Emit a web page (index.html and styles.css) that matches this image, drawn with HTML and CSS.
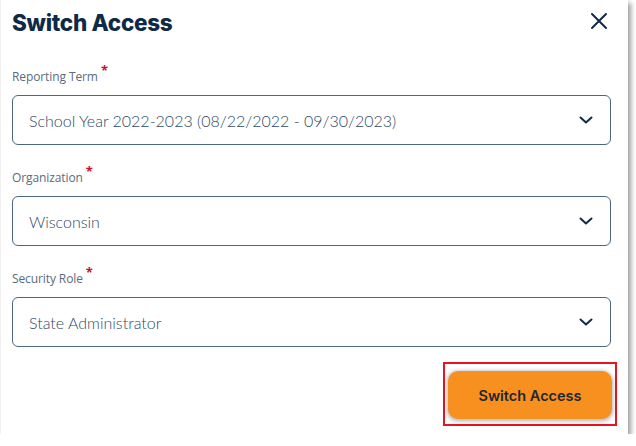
FILE: index.html
```html
<!DOCTYPE html>
<html lang="en">
<head>
<meta charset="utf-8">
<title>Switch Access</title>
<link rel="stylesheet" href="styles.css">
</head>
<body>
<div class="panel">
  <div class="header">
    <h1 class="title">Switch Access</h1>
    <button class="close" aria-label="Close">
      <svg width="18" height="18" viewBox="0 0 18 18"><path d="M2 2 L16 16 M16 2 L2 16" stroke="#102a48" stroke-width="2" fill="none" stroke-linecap="round"/></svg>
    </button>
  </div>
  <div class="fields">
    <div class="field">
      <div class="label">Reporting Term<span class="req">*</span></div>
      <div class="select"><span class="value">School Year 2022-2023 (08/22/2022 - 09/30/2023)</span>
        <svg class="chev" width="14" height="8" viewBox="0 0 14 8"><path d="M1.5 1.5 L7 6.5 L12.5 1.5" stroke="#102a48" stroke-width="2" fill="none" stroke-linecap="round" stroke-linejoin="round"/></svg></div>
    </div>
    <div class="field">
      <div class="label">Organization<span class="req">*</span></div>
      <div class="select"><span class="value">Wisconsin</span>
        <svg class="chev" width="14" height="8" viewBox="0 0 14 8"><path d="M1.5 1.5 L7 6.5 L12.5 1.5" stroke="#102a48" stroke-width="2" fill="none" stroke-linecap="round" stroke-linejoin="round"/></svg></div>
    </div>
    <div class="field">
      <div class="label">Security Role<span class="req">*</span></div>
      <div class="select"><span class="value">State Administrator</span>
        <svg class="chev" width="14" height="8" viewBox="0 0 14 8"><path d="M1.5 1.5 L7 6.5 L12.5 1.5" stroke="#102a48" stroke-width="2" fill="none" stroke-linecap="round" stroke-linejoin="round"/></svg></div>
    </div>
  </div>
  <div class="actions">
    <div class="highlight">
      <button class="primary">Switch Access</button>
    </div>
  </div>
</div>
</body>
</html>
```

FILE: styles.css
```css
html, body {
  margin: 0;
  padding: 0;
  background: #ffffff;
}
body {
  font-family: Inter, "Open Sans", sans-serif;
}
.panel {
  width: 628px;
  height: 434px;
  box-sizing: border-box;
  padding: 8px 17px 0 11px;
  background: #ffffff;
  border-left: 1px solid #f0f0f0;
  box-shadow: 3px 3px 5px rgba(0, 0, 0, 0.38);
}
.header {
  display: flex;
  justify-content: space-between;
  align-items: center;
  height: 30px;
}
.title {
  margin: 0;
  font-size: 22.5px;
  line-height: 30px;
  font-weight: 800;
  color: #0e2a47;
  letter-spacing: -0.3px;
}
.close {
  border: 0;
  background: none;
  padding: 0;
  margin-right: 3px;
  margin-top: -4px;
  width: 18px;
  height: 18px;
  display: flex;
}
.fields {
  margin-top: 30px;
  display: flex;
  flex-direction: column;
  gap: 24px;
}
.field {
  display: flex;
  flex-direction: column;
  gap: 11px;
}
.label {
  font-size: 12px;
  line-height: 16px;
  height: 16px;
  color: #5a6b7c;
  font-family: "Open Sans", sans-serif;
  letter-spacing: -0.1px;
}
.req {
  color: #c8102e;
  font-size: 13px;
  font-weight: 700;
  position: relative;
  top: -6px;
  margin-left: 3px;
}
.select {
  height: 50px;
  box-sizing: border-box;
  border: 1.5px solid #4e6681;
  border-radius: 6px;
  display: flex;
  align-items: center;
  justify-content: space-between;
  padding: 0 17px 0 16px;
}
.value {
  font-family: Lato, sans-serif;
  font-weight: 300;
  font-size: 16px;
  color: #2f4866;
}
.chev {
  display: block;
}
.actions {
  display: flex;
  justify-content: flex-end;
  margin-top: 14px;
  margin-right: -6px;
}
.highlight {
  border: 2px solid #e5161d;
  padding: 7px 3px 5px 3px;
  margin-top: 1px;
}
.primary {
  width: 164px;
  height: 48px;
  border: 0;
  border-radius: 10px;
  background: #f7901e;
  color: #1e2630;
  font-family: Inter, sans-serif;
  font-weight: 600;
  font-size: 14.5px;
  box-shadow: 0 1px 4px 1px rgba(0, 0, 0, 0.3);
  display: block;
}
```
